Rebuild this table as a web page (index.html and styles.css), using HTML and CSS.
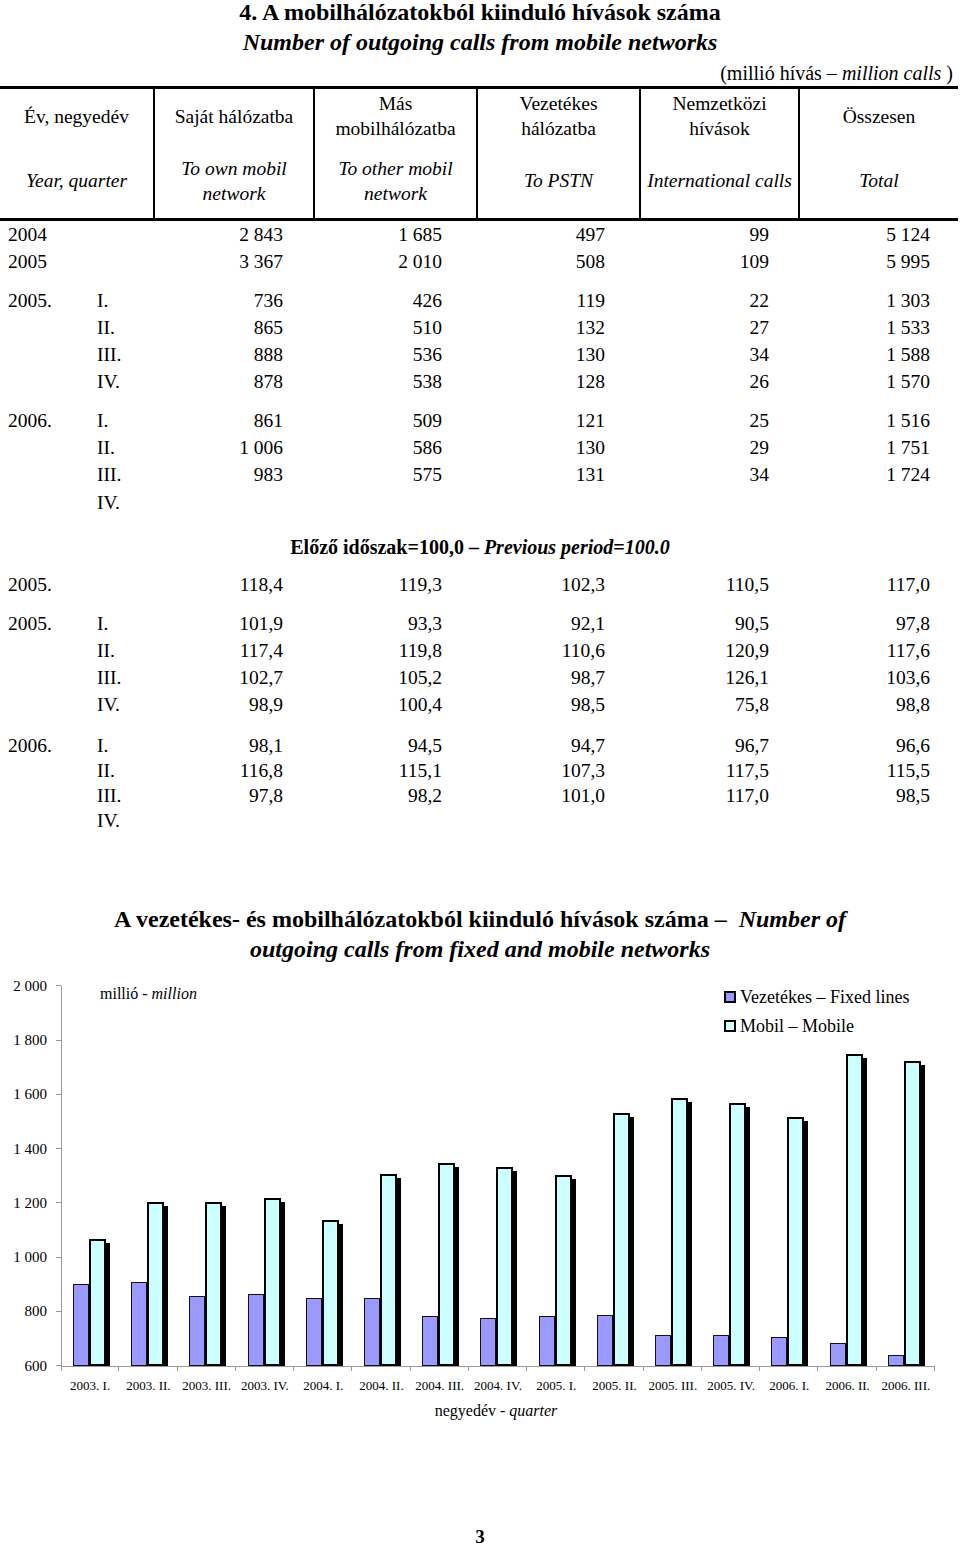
FILE: index.html
```html
<!DOCTYPE html>
<html lang="hu">
<head>
<meta charset="utf-8">
<title>A mobilhálózatokból kiinduló hívások száma</title>
<link rel="stylesheet" href="styles.css">
</head>
<body>
<div class="page">
  <div class="title">
    <div class="t1">4. A mobilhálózatokból kiinduló hívások száma</div>
    <div class="t2">Number of outgoing calls from mobile networks</div>
  </div>
  <div class="unit">(millió hívás – <i>million calls</i> )</div>

  <div class="thead">
    <div class="hc">Év, negyedév</div>
    <div class="hc vl">Saját hálózatba</div>
    <div class="hc vl">Más<br>mobilhálózatba</div>
    <div class="hc vl">Vezetékes<br>hálózatba</div>
    <div class="hc vl">Nemzetközi<br>hívások</div>
    <div class="hc vl">Összesen</div>
    <div class="hc en">Year, quarter</div>
    <div class="hc en vl">To own mobil<br>network</div>
    <div class="hc en vl">To other mobil<br>network</div>
    <div class="hc en vl">To PSTN</div>
    <div class="hc en vl">International calls</div>
    <div class="hc en vl">Total</div>
  </div>

  <div class="tbody">
    <div class="grp">
      <div class="row"><span>2004</span><span></span><span class="n">2 843</span><span class="n">1 685</span><span class="n">497</span><span class="n">99</span><span class="n">5 124</span></div>
      <div class="row"><span>2005</span><span></span><span class="n">3 367</span><span class="n">2 010</span><span class="n">508</span><span class="n">109</span><span class="n">5 995</span></div>
    </div>
    <div class="grp g1">
      <div class="row"><span>2005.</span><span>I.</span><span class="n">736</span><span class="n">426</span><span class="n">119</span><span class="n">22</span><span class="n">1 303</span></div>
      <div class="row"><span></span><span>II.</span><span class="n">865</span><span class="n">510</span><span class="n">132</span><span class="n">27</span><span class="n">1 533</span></div>
      <div class="row"><span></span><span>III.</span><span class="n">888</span><span class="n">536</span><span class="n">130</span><span class="n">34</span><span class="n">1 588</span></div>
      <div class="row"><span></span><span>IV.</span><span class="n">878</span><span class="n">538</span><span class="n">128</span><span class="n">26</span><span class="n">1 570</span></div>
    </div>
    <div class="grp g1">
      <div class="row"><span>2006.</span><span>I.</span><span class="n">861</span><span class="n">509</span><span class="n">121</span><span class="n">25</span><span class="n">1 516</span></div>
      <div class="row"><span></span><span>II.</span><span class="n">1 006</span><span class="n">586</span><span class="n">130</span><span class="n">29</span><span class="n">1 751</span></div>
      <div class="row"><span></span><span>III.</span><span class="n">983</span><span class="n">575</span><span class="n">131</span><span class="n">34</span><span class="n">1 724</span></div>
      <div class="row"><span></span><span>IV.</span><span></span><span></span><span></span><span></span><span></span></div>
    </div>

    <div class="section">Előző időszak=100,0 – <i>Previous period=100.0</i></div>

    <div class="grp g2">
      <div class="row"><span>2005.</span><span></span><span class="n">118,4</span><span class="n">119,3</span><span class="n">102,3</span><span class="n">110,5</span><span class="n">117,0</span></div>
    </div>
    <div class="grp g3">
      <div class="row"><span>2005.</span><span>I.</span><span class="n">101,9</span><span class="n">93,3</span><span class="n">92,1</span><span class="n">90,5</span><span class="n">97,8</span></div>
      <div class="row"><span></span><span>II.</span><span class="n">117,4</span><span class="n">119,8</span><span class="n">110,6</span><span class="n">120,9</span><span class="n">117,6</span></div>
      <div class="row"><span></span><span>III.</span><span class="n">102,7</span><span class="n">105,2</span><span class="n">98,7</span><span class="n">126,1</span><span class="n">103,6</span></div>
      <div class="row"><span></span><span>IV.</span><span class="n">98,9</span><span class="n">100,4</span><span class="n">98,5</span><span class="n">75,8</span><span class="n">98,8</span></div>
    </div>
    <div class="grp g4">
      <div class="row"><span>2006.</span><span>I.</span><span class="n">98,1</span><span class="n">94,5</span><span class="n">94,7</span><span class="n">96,7</span><span class="n">96,6</span></div>
      <div class="row"><span></span><span>II.</span><span class="n">116,8</span><span class="n">115,1</span><span class="n">107,3</span><span class="n">117,5</span><span class="n">115,5</span></div>
      <div class="row"><span></span><span>III.</span><span class="n">97,8</span><span class="n">98,2</span><span class="n">101,0</span><span class="n">117,0</span><span class="n">98,5</span></div>
      <div class="row"><span></span><span>IV.</span><span></span><span></span><span></span><span></span><span></span></div>
    </div>
  </div>

  <div class="chart">
    <div class="chart-title">A vezetékes- és mobilhálózatokból kiinduló hívások száma – &nbsp;<i>Number of</i><br><i>outgoing calls from fixed and mobile networks</i></div>
    <div class="chart-body">
      <div class="yaxis">
        <div class="yl"><span>2 000</span><i class="tk"></i></div>
        <div class="yl"><span>1 800</span><i class="tk"></i></div>
        <div class="yl"><span>1 600</span><i class="tk"></i></div>
        <div class="yl"><span>1 400</span><i class="tk"></i></div>
        <div class="yl"><span>1 200</span><i class="tk"></i></div>
        <div class="yl"><span>1 000</span><i class="tk"></i></div>
        <div class="yl"><span>800</span><i class="tk"></i></div>
        <div class="yl"><span>600</span><i class="tk"></i></div>
      </div>
      <div class="plot">
        <div class="note">millió - <i>million</i></div>
        <div class="legend">
          <div class="li"><i class="sw fixed"></i>Vezetékes – Fixed lines</div>
          <div class="li"><i class="sw mobile"></i>Mobil – Mobile</div>
        </div>
        <div class="cats">
          <div class="cat"><div class="bar fixed" style="height:82px"></div><div class="bar mobile" style="height:127px"></div></div>
          <div class="cat"><div class="bar fixed" style="height:84px"></div><div class="bar mobile" style="height:164px"></div></div>
          <div class="cat"><div class="bar fixed" style="height:70px"></div><div class="bar mobile" style="height:164px"></div></div>
          <div class="cat"><div class="bar fixed" style="height:72px"></div><div class="bar mobile" style="height:168px"></div></div>
          <div class="cat"><div class="bar fixed" style="height:68px"></div><div class="bar mobile" style="height:146px"></div></div>
          <div class="cat"><div class="bar fixed" style="height:68px"></div><div class="bar mobile" style="height:192px"></div></div>
          <div class="cat"><div class="bar fixed" style="height:50px"></div><div class="bar mobile" style="height:203px"></div></div>
          <div class="cat"><div class="bar fixed" style="height:48px"></div><div class="bar mobile" style="height:199px"></div></div>
          <div class="cat"><div class="bar fixed" style="height:50px"></div><div class="bar mobile" style="height:191px"></div></div>
          <div class="cat"><div class="bar fixed" style="height:51px"></div><div class="bar mobile" style="height:253px"></div></div>
          <div class="cat"><div class="bar fixed" style="height:31px"></div><div class="bar mobile" style="height:268px"></div></div>
          <div class="cat"><div class="bar fixed" style="height:31px"></div><div class="bar mobile" style="height:263px"></div></div>
          <div class="cat"><div class="bar fixed" style="height:29px"></div><div class="bar mobile" style="height:249px"></div></div>
          <div class="cat"><div class="bar fixed" style="height:23px"></div><div class="bar mobile" style="height:312px"></div></div>
          <div class="cat"><div class="bar fixed" style="height:11px"></div><div class="bar mobile" style="height:305px"></div></div>
        </div>
      </div>
    </div>
    <div class="xlabels">
      <div class="xl">2003. I.</div>
      <div class="xl">2003. II.</div>
      <div class="xl">2003. III.</div>
      <div class="xl">2003. IV.</div>
      <div class="xl">2004. I.</div>
      <div class="xl">2004. II.</div>
      <div class="xl">2004. III.</div>
      <div class="xl">2004. IV.</div>
      <div class="xl">2005. I.</div>
      <div class="xl">2005. II.</div>
      <div class="xl">2005. III.</div>
      <div class="xl">2005. IV.</div>
      <div class="xl">2006. I.</div>
      <div class="xl">2006. II.</div>
      <div class="xl">2006. III.</div>
    </div>
    <div class="xtitle">negyedév - <i>quarter</i></div>
  </div>

  <div class="pagenum">3</div>
</div>
</body>
</html>
```

FILE: styles.css
```css
html, body {
  margin: 0;
  padding: 0;
  background: #fff;
}
body {
  font-family: "Liberation Serif", "Times New Roman", serif;
  color: #000;
}
.page {
  width: 960px;
}
.title {
  text-align: center;
  font-weight: bold;
  font-size: 24px;
}
.t1 {
  line-height: 24px;
}
.t2 {
  line-height: 36px;
  font-style: italic;
}
.unit {
  text-align: right;
  padding-right: 7px;
  font-size: 20px;
  line-height: 26px;
}

/* table header */
.thead {
  width: 958px;
  display: grid;
  grid-template-columns: 153px 160px 163px 163px 159px 160px;
  grid-template-rows: 54px 75px;
  border-top: 3px solid #000;
  border-bottom: 3px solid #000;
  font-size: 19.5px;
  line-height: 25px;
}
.hc {
  display: flex;
  align-items: center;
  justify-content: center;
  text-align: center;
  box-sizing: border-box;
}
.hc.en {
  font-style: italic;
}
.hc.vl {
  border-left: 2px solid #000;
}

/* table body */
.tbody {
  font-size: 19.5px;
}
.row {
  display: grid;
  grid-template-columns: 89px 90px 96px 159px 163px 164px 161px;
  padding-left: 8px;
  line-height: 27.3px;
  height: 27.3px;
}
.row .n {
  text-align: right;
}
.g1 {
  margin-top: 11px;
}
.section {
  margin-top: 18px;
  text-align: center;
  font-weight: bold;
  font-size: 20px;
  line-height: 27.3px;
}
.g2 {
  margin-top: 10px;
}
.g3 {
  margin-top: 11px;
}
.g4 {
  margin-top: 14px;
}
.g4 .row {
  line-height: 25px;
  height: 25px;
}

/* chart */
.chart {
  margin-top: 71px;
}
.chart-title {
  text-align: center;
  font-weight: bold;
  font-size: 24px;
  line-height: 30px;
}
.chart-body {
  display: flex;
  align-items: flex-start;
  margin-top: 22px;
}
.yaxis {
  width: 61px;
  height: 396px;
  margin: -8px 0;
  display: flex;
  flex-direction: column;
  justify-content: space-between;
  font-size: 15px;
}
.yl {
  height: 16px;
  line-height: 16px;
  display: flex;
  justify-content: flex-end;
  align-items: center;
  gap: 9px;
}
.tk {
  width: 5px;
  height: 1px;
  background: #999;
}
.plot {
  position: relative;
  width: 873px;
  height: 380px;
  border-left: 1px solid #999;
  border-bottom: 1px solid #999;
}
.note {
  position: absolute;
  left: 38px;
  top: -2px;
  font-size: 16px;
  line-height: 20px;
  white-space: nowrap;
}
.legend {
  position: absolute;
  left: 662px;
  top: -3px;
  font-size: 18px;
  line-height: 29px;
  white-space: nowrap;
}
.li {
  display: flex;
  align-items: center;
}
.sw {
  display: inline-block;
  width: 12px;
  height: 12px;
  box-sizing: border-box;
  border: 2px solid #000;
  margin-right: 4px;
}
.sw.fixed { background: #9999ff; }
.sw.mobile { background: #ccffff; }
.cats {
  display: flex;
  height: 100%;
  overflow: hidden;
}
.cat {
  flex: 1 1 0;
  display: flex;
  align-items: flex-end;
  padding-left: 11px;
}
.bar {
  box-sizing: border-box;
  width: 17px;
  border: 2px solid #000;
}
.bar.fixed {
  background: #9999ff;
  border-width: 1px;
  border-color: #111;
  width: 16px;
}
.bar.mobile {
  background: #ccffff;
  box-shadow: 4px 4px 0 #000;
  position: relative;
}
.xlabels {
  display: flex;
  margin-left: 61px;
  width: 874px;
  height: 26px;
  background: linear-gradient(#999, #999) no-repeat left top / 1px 4px;
}
.xl {
  flex: 1 1 0;
  text-align: center;
  font-size: 13px;
  line-height: 14px;
  padding-top: 12px;
  white-space: nowrap;
  background: linear-gradient(#999, #999) no-repeat right top / 1px 4px;
}
.xtitle {
  margin-top: 8px;
  text-align: center;
  font-size: 16px;
  line-height: 20px;
  padding-left: 32px;
}
.pagenum {
  margin-top: 104px;
  text-align: center;
  font-weight: bold;
  font-size: 19px;
  line-height: 24px;
}
```
